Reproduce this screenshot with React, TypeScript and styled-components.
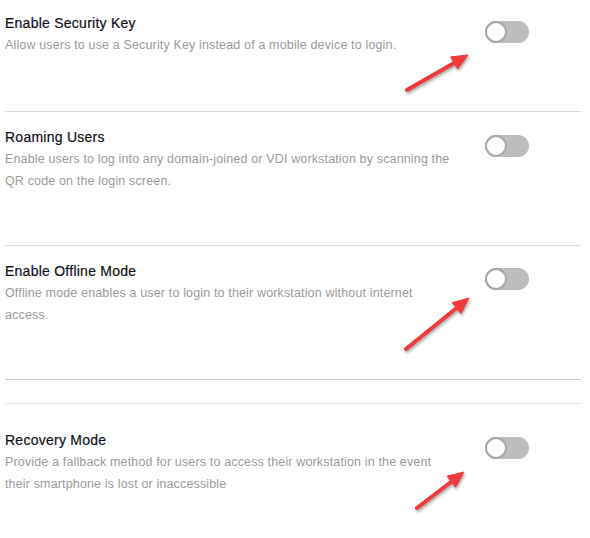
import React from "react";
import styled, { createGlobalStyle } from "styled-components";

const Global = createGlobalStyle`
  html, body { margin: 0; padding: 0; background: #ffffff; }
  body { font-family: "Liberation Sans", Arial, sans-serif; }
`;

const Page = styled.div`
  position: relative;
  width: 590px;
  height: 538px;
  overflow: hidden;
  padding: 0 9px 0 5px;
  box-sizing: border-box;
`;

const Section = styled.section<{ $top: number; $height: number; $border?: string }>`
  display: flex;
  align-items: flex-start;
  justify-content: space-between;
  box-sizing: border-box;
  height: ${(p) => p.$height}px;
  padding-top: ${(p) => p.$top}px;
  border-bottom: ${(p) => (p.$border ? `1px solid ${p.$border}` : "none")};
`;

const Spacer = styled.div`
  height: 23px;
  border-bottom: 1px solid #e3e3e3;
`;

const Text = styled.div`
  display: flex;
  flex-direction: column;
  width: 470px;
`;

const Title = styled.h3`
  margin: 0;
  font-size: 14px;
  line-height: 20px;
  font-weight: 400;
  color: #111118;
  letter-spacing: 0.25px;
  -webkit-text-stroke: 0.2px #111118;
`;

const Desc = styled.p`
  margin: 1px 0 0;
  font-size: 12.5px;
  line-height: 22px;
  letter-spacing: 0.15px;
  color: #9b9b9b;
  white-space: nowrap;
`;

const Toggle = styled.div<{ $top: number }>`
  position: relative;
  width: 44px;
  height: 22px;
  margin-top: ${(p) => p.$top}px;
  margin-right: 52px;
  border-radius: 11px;
  background: #bdbdbd;
  flex-shrink: 0;
`;

const Knob = styled.span`
  position: absolute;
  left: 0;
  top: 0;
  width: 22px;
  height: 22px;
  box-sizing: border-box;
  border-radius: 50%;
  background: #ffffff;
  border: 2px solid #a9a9a9;
`;

const Overlay = styled.svg`
  position: absolute;
  left: 0;
  top: 0;
  pointer-events: none;
  filter: drop-shadow(1px 2px 1.5px rgba(0, 0, 0, 0.35));
`;

type Arrow = { x1: number; y1: number; x2: number; y2: number };

const arrows: Arrow[] = [
  { x1: 407, y1: 90, x2: 468, y2: 55 },
  { x1: 406, y1: 349, x2: 469, y2: 298 },
  { x1: 417, y1: 508, x2: 464, y2: 472 },
];

function head(a: Arrow) {
  const dx = a.x2 - a.x1;
  const dy = a.y2 - a.y1;
  const len = Math.hypot(dx, dy);
  const ux = dx / len;
  const uy = dy / len;
  const nx = -uy;
  const ny = ux;
  const L = 16;
  const W = 7;
  const bx = a.x2 - ux * L;
  const by = a.y2 - uy * L;
  return {
    pts: `${a.x2},${a.y2} ${bx + nx * W},${by + ny * W} ${bx - nx * W},${by - ny * W}`,
    lx: a.x2 - ux * (L - 2),
    ly: a.y2 - uy * (L - 2),
  };
}

type Item = {
  title: string;
  lines: string[];
  top: number;
  height: number;
  border?: string;
  toggleTop: number;
};

const items: Item[] = [
  {
    title: "Enable Security Key",
    lines: ["Allow users to use a Security Key instead of a mobile device to login."],
    top: 13,
    height: 112,
    border: "#d9d9df",
    toggleTop: 8,
  },
  {
    title: "Roaming Users",
    lines: [
      "Enable users to log into any domain-joined or VDI workstation by scanning the",
      "QR code on the login screen.",
    ],
    top: 15,
    height: 134,
    border: "#d9d9df",
    toggleTop: 8,
  },
  {
    title: "Enable Offline Mode",
    lines: [
      "Offline mode enables a user to login to their workstation without internet",
      "access.",
    ],
    top: 15,
    height: 134,
    border: "#cccccc",
    toggleTop: 7,
  },
];

const last: Item = {
  title: "Recovery Mode",
  lines: [
    "Provide a fallback method for users to access their workstation in the event",
    "their smartphone is lost or inaccessible",
  ],
  top: 26,
  height: 134,
  toggleTop: 7,
};

function Setting({ item }: { item: Item }) {
  return (
    <Section $top={item.top} $height={item.height} $border={item.border}>
      <Text>
        <Title>{item.title}</Title>
        <Desc>
          {item.lines.map((l, i) => (
            <React.Fragment key={i}>
              {i > 0 && <br />}
              {l}
            </React.Fragment>
          ))}
        </Desc>
      </Text>
      <Toggle $top={item.toggleTop}>
        <Knob />
      </Toggle>
    </Section>
  );
}

export default function App() {
  return (
    <>
      <Global />
      <Page>
        {items.map((it) => (
          <Setting key={it.title} item={it} />
        ))}
        <Spacer />
        <Setting item={last} />
        <Overlay width={590} height={538} viewBox="0 0 590 538">
          {arrows.map((a, i) => {
            const h = head(a);
            return (
              <g key={i} fill="#f2393b" stroke="#f2393b">
                <line x1={a.x1} y1={a.y1} x2={h.lx} y2={h.ly} strokeWidth={4} strokeLinecap="round" />
                <polygon points={h.pts} strokeWidth={1} strokeLinejoin="round" />
              </g>
            );
          })}
        </Overlay>
      </Page>
    </>
  );
}
